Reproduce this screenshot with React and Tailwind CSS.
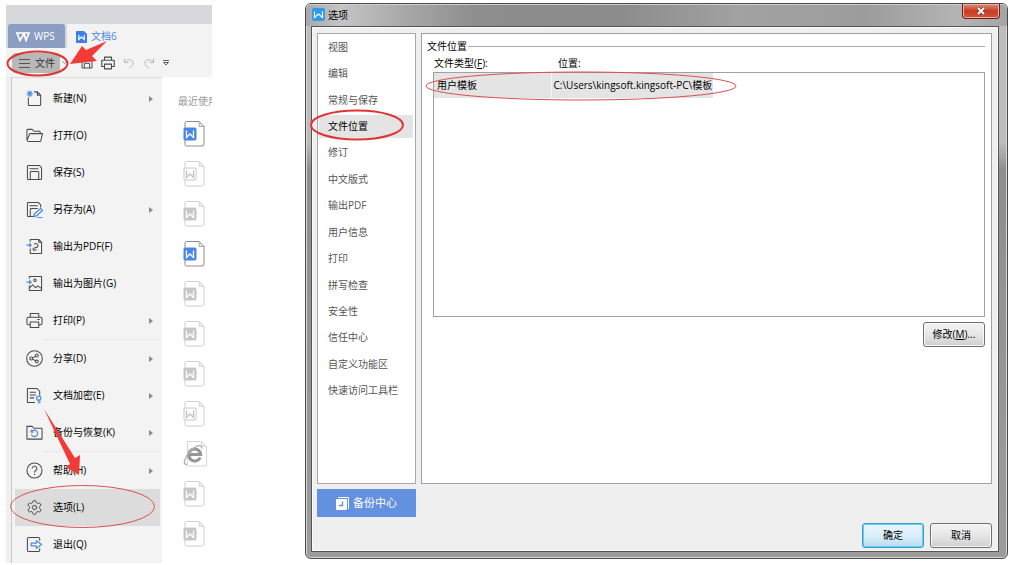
import React from "react";
import { Settings } from "lucide-react";

const G = "#4a4a4a";
const B = "#4a8fe0";

function Icon({ children, size = "size-[17px]" }) {
  return (
    <svg viewBox="0 0 18 18" className={`${size} shrink-0`} fill="none" stroke={G} strokeWidth="1.1" strokeLinejoin="round" aria-hidden="true">
      {children}
    </svg>
  );
}

const icons = {
  new: (
    <Icon>
      <path d="M2.500 8v7.500a1 1 0 0 0 1 1h11a1 1 0 0 0 1-1V5.500l-3.500-3.500H8.500M12 2v3.500h3.500" />
      <path d="M4 .5v7M.5 4h7M1.500 1.500l5 5M6.500 1.500l-5 5" stroke={B} />
    </Icon>
  ),
  open: (
    <Icon>
      <path d="M1 14.500V3.500a1 1 0 0 1 1-1h4.500l2 2H14a1 1 0 0 1 1 1V7M1 14.500 4 7h13.500l-1.800 7.500a1 1 0 0 1-1 .8H1.500" />
    </Icon>
  ),
  save: (
    <Icon>
      <path d="M2.500 1.500H14l2.500 2.500v11.500a1 1 0 0 1-1 1h-13a1 1 0 0 1-1-1v-13a1 1 0 0 1 1-1zM4.500 16.500V9a1 1 0 0 1 1-1h7a1 1 0 0 1 1 1v7.500M3.500 5h9.500" />
    </Icon>
  ),
  saveAs: (
    <Icon>
      <path d="M7.500 16.500h-5a1 1 0 0 1-1-1v-13a1 1 0 0 1 1-1H13l2.500 2.500v3M4.500 16V9a1 1 0 0 1 1-1h7M3.500 5h9" />
      <path d="m9 13.500 6.500-5.500 2 2-6.500 5.800-3 1zM12 17.500h5.500" stroke={B} strokeWidth="1.300" />
    </Icon>
  ),
  pdf: (
    <Icon>
      <path d="M4.500 4V1.500h9l3 3v12h-12V11M13.500 1.500v3h3" />
      <path d="M8.500 6.500c2-1.500 5 0 4 2.500-.8 2-4.500.5-5 2.500-.3 2 2.500 2 3.500.5" />
      <path d="M.5 7.500h5M3.500 5.500l2 2-2 2" stroke={B} strokeWidth="1.300" />
    </Icon>
  ),
  image: (
    <Icon>
      <path d="M3.500 4V1.500h13v15h-13V11M3.500 14l3.500-3.500 3 3 2.500-2 4 3" />
      <circle cx="9.500" cy="5.500" r="1.300" />
      <path d="M.5 7.500h5M3.500 5.500l2 2-2 2" stroke={B} strokeWidth="1.300" />
    </Icon>
  ),
  print: (
    <Icon>
      <path d="M4.500 5.500v-4h9v4M4.500 13.500h-2a1.500 1.500 0 0 1-1.500-1.500V7a1.500 1.500 0 0 1 1.500-1.500h13A1.500 1.500 0 0 1 17 7v5a1.500 1.500 0 0 1-1.500 1.500h-2M4.500 10.500h9v6h-9zM12 8h2.500" />
    </Icon>
  ),
  share: (
    <Icon>
      <circle cx="9" cy="9" r="8.300" />
      <circle cx="5.500" cy="9" r="1.500" />
      <circle cx="11.500" cy="5.800" r="1.500" />
      <circle cx="11.500" cy="12.200" r="1.500" />
      <path d="m7 8.300 3-1.700M7 9.700l3 1.700" />
    </Icon>
  ),
  encrypt: (
    <Icon>
      <path d="M9.500 16.500h-8v-15h10l3 3V9M4 5.500h6.500M4 8.500h6.500M4 11.500h4.500" />
      <circle cx="13.500" cy="11.800" r="2.200" stroke={B} strokeWidth="1.300" />
      <path d="M13.500 14v3.500M13.500 16h2" stroke={B} strokeWidth="1.300" />
    </Icon>
  ),
  backup: (
    <Icon>
      <path d="M1 16V2.500h5.500l2 2h8.500V16z" />
      <path d="M6 8.200a3.400 3.400 0 1 1-.3 2.800M5.500 6v2.500H8" stroke={B} strokeWidth="1.300" />
    </Icon>
  ),
  help: (
    <Icon>
      <circle cx="9" cy="9" r="8" />
      <path d="M6.500 7a2.500 2.500 0 1 1 3.500 2.300c-.8.400-1 .7-1 1.700M9 12.500v1.200" />
    </Icon>
  ),
  options: <Settings className="size-[17px] shrink-0 text-[#4a4a4a]" strokeWidth={1.4} aria-hidden="true" />,
  exit: (
    <Icon>
      <path d="M14.500 5V3a1.500 1.500 0 0 0-1.500-1.500H3A1.500 1.500 0 0 0 1.500 3v12A1.500 1.500 0 0 0 3 16.500h10a1.500 1.500 0 0 0 1.500-1.500v-2" />
      <path d="M5.500 7.500h5.500V5l5.500 4-5.500 4v-2.500H5.500z" stroke={B} strokeWidth="1.300" />
    </Icon>
  ),
};

const menuGroups = [
  [
    ["new", "新建(N)", true],
    ["open", "打开(O)"],
    ["save", "保存(S)"],
    ["saveAs", "另存为(A)", true],
    ["pdf", "输出为PDF(F)"],
    ["image", "输出为图片(G)"],
    ["print", "打印(P)", true],
  ],
  [
    ["share", "分享(D)", true],
    ["encrypt", "文档加密(E)", true],
    ["backup", "备份与恢复(K)", true],
  ],
  [
    ["help", "帮助(H)", true],
    ["options", "选项(L)"],
    ["exit", "退出(Q)"],
  ],
];

function MenuItem({ icon, label, sub }) {
  const active = icon === "options";
  return (
    <button type="button" className={`flex h-[37px] items-center gap-2.5 pr-[7px] pl-[11px] text-left ${active ? "bg-[#dcdcdc]" : ""}`}>
      {icons[icon]}
      <span className="grow whitespace-nowrap">{label}</span>
      {sub && (
        <svg viewBox="0 0 4 6" className="h-1.5 w-1" fill="#8a8a8a" aria-hidden="true">
          <path d="M0 0l4 3-4 3z" />
        </svg>
      )}
    </button>
  );
}

const fileKinds = ["blue", "outline", "gray", "blue", "gray", "gray", "gray", "outline", "web", "gray", "gray"];

function FileIcon({ kind }) {
  const blue = kind === "blue";
  const line = blue ? "#8c8c8c" : "#cfcfcf";
  if (kind === "web") {
    return (
      <svg viewBox="0 0 24 26" className="h-[26px] w-6" fill="none" aria-hidden="true">
        <path d="M4.500 .5h14l5 5V25h-19z" fill="#fff" stroke="#d4d4d4" />
        <path d="M18.500 .5v5h5z" fill="#ececec" stroke="#d4d4d4" strokeWidth=".7" />
        <path d="M17.200 16.500a6 6 0 1 1 .5-3H7" stroke="#969696" strokeWidth="3" />
        <path d="M4 23.500C-1.500 24 2 15 9 8.500c6-5 10.500-5 9.500-1" stroke="#b0b0b0" strokeWidth="1.400" />
      </svg>
    );
  }
  return (
    <svg viewBox="0 0 24 26" className="h-[26px] w-6" fill="none" aria-hidden="true">
      <path d="M3.500 .5h12.500l5 5V23a2 2 0 0 1-2 2H3.500a1.500 1.500 0 0 1-1.500-1.500V2A1.500 1.500 0 0 1 3.500 .5z" fill="#fff" stroke={line} />
      <path d="M16 .5v5h5z" fill="#ececec" stroke={line} strokeWidth=".7" />
      <rect x="1" y="7" width="12" height="12" rx="1" fill={blue ? "#4a86e8" : kind === "outline" ? "#fff" : "#c6c6c6"} stroke={blue ? "#4a86e8" : "#c6c6c6"} />
      <path d="M3.500 9.500v7l3.500-3.500 3.500 3.500v-7" stroke={kind === "outline" ? "#c0c0c0" : "#fff"} strokeWidth="1.300" />
    </svg>
  );
}

function WpsPanel() {
  return (
    <section className="relative mt-[5px] flex w-[206px] shrink-0 flex-col bg-[#f3f3f4]">
      <div className="flex h-[43px] items-end bg-[#d6d8db] pl-0.5">
        <button type="button" className="flex h-6 w-[57px] items-center gap-1 rounded-t-[3px] bg-[#8b9dc3] pt-px pl-2 text-[10px] text-white">
          <svg viewBox="0 0 14 10" className="h-2.5 w-3.5" fill="none" stroke="#fff" strokeWidth="1.700" aria-hidden="true">
            <path d="M1 1l3 7.500L8 1.500l2 7L13 1M0 1h8M8.500 1H14" />
          </svg>
          WPS
        </button>
        <button type="button" className="ml-0.5 flex h-6 grow items-center gap-1 bg-[#f3f3f4] pt-px pl-[9px] text-[10px] text-[#4a86e8]">
          <svg viewBox="0 0 11 12" className="h-3 w-[11px]" aria-hidden="true">
            <path d="M1 0h7l3 3v8a1 1 0 0 1-1 1H1a1 1 0 0 1-1-1V1a1 1 0 0 1 1-1z" fill="#3f7de8" />
            <path d="M2.800 4v4.500l2.700-2.500 2.700 2.500V4" fill="none" stroke="#fff" strokeWidth="1.200" />
          </svg>
          文档6
        </button>
      </div>
      <div className="flex h-[29px] items-center pl-1.5 text-[#333]">
        <button type="button" className="flex h-5 w-12 items-center gap-[5px] rounded-sm bg-[#b8b8b9] pt-px pl-[7px] text-[10px]">
          <svg viewBox="0 0 11 9" className="h-[9px] w-[11px]" stroke="#555" aria-hidden="true">
            <path d="M0 .5h11M0 4.500h11M0 8.500h11" />
          </svg>
          文件
        </button>
        <button type="button" aria-label="展开" className="ml-0.5">
          <svg viewBox="0 0 5 4" className="h-1 w-[5px]" fill="none" stroke="#888" aria-hidden="true">
            <path d="M.5 .5l2 2 2-2" />
          </svg>
        </button>
        <div className="ml-3.5 flex items-center gap-2">
          <button type="button" aria-label="保存">
            <Icon size="size-3">
              <path d="M1.500 1.500H12l4.500 4.500v10.500h-15zM5 16.500v-7h8v7" strokeWidth="1.500" />
            </Icon>
          </button>
          <button type="button" aria-label="打印">
            <Icon size="size-3.5">
              <path d="M4.500 5.500v-4h9v4M4.500 13.500H1V5.500h16v8h-3.500M4.500 10.500h9v6h-9z" strokeWidth="1.400" />
            </Icon>
          </button>
          <button type="button" aria-label="撤销">
            <svg viewBox="0 0 12 12" className="size-3" fill="none" stroke="#b8b8b8" aria-hidden="true">
              <path d="M1.500 1.500v4h4M1.500 5.500C5 1 10.500 2.500 10 6.500 9.700 8.500 8 10 6 11" />
            </svg>
          </button>
          <button type="button" aria-label="恢复">
            <svg viewBox="0 0 12 12" className="size-3" fill="none" stroke="#b8b8b8" aria-hidden="true">
              <path d="M10.500 1.500v4h-4M10.500 5.500C7 1 1.500 2.500 2 6.500 2.300 8.500 4 10 6 11" />
            </svg>
          </button>
          <button type="button" aria-label="更多">
            <svg viewBox="0 0 6 6" className="size-1.5" fill="none" stroke="#666" aria-hidden="true">
              <path d="M0 .5h6M.5 2.500h5L3 5z" />
            </svg>
          </button>
        </div>
      </div>
      <div className="flex grow">
        <div className="w-[6px] shrink-0 border-r border-[#c8c8c8] bg-[#efeff0]" />
        <nav className="flex w-[150px] shrink-0 flex-col border-t border-[#dcdcdc] bg-[#f3f3f3] pt-0.5 pr-0.5 pl-[3px] text-[10px] text-black">
          {menuGroups.map((group, i) => (
            <div key={i} className="flex flex-col">
              {i > 0 && <hr className="ml-7 border-[#e8e8e8]" />}
              {group.map(([icon, label, sub]) => (
                <MenuItem key={icon} icon={icon} label={label} sub={sub} />
              ))}
            </div>
          ))}
        </nav>
        <div className="flex min-w-0 grow flex-col overflow-hidden bg-white">
          <h2 className="mt-4 ml-4 text-[10px] leading-4 whitespace-nowrap text-[#999]">最近使用</h2>
          <ul className="mt-3 ml-[21px] flex flex-col gap-3.5">
            {fileKinds.map((kind, i) => (
              <li key={i}>
                <FileIcon kind={kind} />
              </li>
            ))}
          </ul>
        </div>
      </div>
      <svg viewBox="0 0 206 557" className="pointer-events-none absolute top-0 left-0 h-[557px] w-[206px]" fill="none" aria-hidden="true">
        <ellipse cx="31.500" cy="58.500" rx="30" ry="12" stroke="#e23333" strokeWidth="2" />
        <path d="M64 59l12-18 4 4 21-9-15 15 5 5z" fill="#f23a36" />
        <path d="M38 404l31 49 5-3-1 20-13-8 4-3z" fill="#f23a36" />
        <ellipse cx="76.500" cy="501.500" rx="72" ry="21" stroke="#d9504f" />
      </svg>
    </section>
  );
}

const categories = ["视图", "编辑", "常规与保存", "文件位置", "修订", "中文版式", "输出PDF", "用户信息", "打印", "拼写检查", "安全性", "信任中心", "自定义功能区", "快速访问工具栏"];

const plain = "border-[#707070] bg-linear-to-b from-[#f3f3f3] via-[#e6e6e6] to-[#cfcfcf] shadow-[inset_0_0_0_1px_#f8f8f8]";
const primary = "border-[#3c9cc4] bg-linear-to-b from-[#eaf6fd] via-[#d9eef9] to-[#b9dcf0] shadow-[inset_0_0_0_1px_#5fd3f5]";

function DialogButton({ look = plain, children }) {
  return (
    <button type="button" className={`h-[25px] w-[62px] rounded-[3px] border text-[10px] text-black ${look}`}>
      {children}
    </button>
  );
}

function OptionsDialog() {
  return (
    <section className="relative mt-[3px] mr-[3px] mb-1 ml-[93px] flex min-w-0 grow flex-col rounded-[6px] border border-[#4a4a4a] bg-linear-to-b from-[#bcbcbc] from-25% via-[#8e8e8e] via-30% to-[#9c9c9c] pr-2 pb-1.5 pl-[5px] shadow-[inset_0_0_0_1px_#d8d8d8]">
      <header className="-mr-2 -ml-[5px] flex h-[22px] items-start rounded-t-[5px] bg-[linear-gradient(90deg,#a8a8a8_0%,#c4c4c4_5%,#a8a8a8_14%,#8e8e8e_24%,#8c8c8c_45%,#a2a2a2_62%,#9c9c9c_80%,#b4b4b4_93%,#a4a4a4_100%)] pl-1.5 shadow-[inset_0_1px_0_#d0d0d0]">
        <svg viewBox="0 0 13 13" className="mt-1 size-[13px]" aria-hidden="true">
          <rect width="13" height="13" rx="2" fill="#2f9bf0" />
          <path d="M2.500 3.500v6l4-3.500 4 3.500v-6" fill="none" stroke="#fff" strokeWidth="1.200" />
        </svg>
        <h1 className="ml-[3px] grow text-[10px] leading-[22px] text-black">选项</h1>
        <button type="button" aria-label="关闭" className="mr-[7px] flex h-[15px] w-[38px] items-center justify-center rounded-b-[4px] border border-t-0 border-[#6b2018] bg-linear-to-b from-[#e08a78] via-[#c63a22] to-[#d4553c] shadow-[inset_0_0_0_1px_#eeb0a4]">
          <svg viewBox="0 0 10 8" className="h-2 w-2.5" aria-hidden="true">
            <path d="M2 1l6 6M8 1L2 7" stroke="#5a4444" strokeWidth="3.200" />
            <path d="M2 1l6 6M8 1L2 7" stroke="#fff" strokeWidth="1.800" />
          </svg>
        </button>
      </header>
      <div className="flex grow flex-col border border-[#555] bg-[#efefef] pt-1.5 pr-1.5 pl-[5px] shadow-[inset_0_0_0_1px_#fafafa]">
        <div className="flex gap-[5px]">
          <div className="flex w-[99px] shrink-0 flex-col gap-[5px]">
            <nav className="h-[451px] border border-[#a8a8a8] bg-white pr-0.5 pl-px">
              <ul className="grid h-[370px] auto-rows-fr text-[10px] text-[#555]">
                {categories.map((name) => (
                  <li key={name} className="flex items-center">
                    <button type="button" className={`flex h-[23px] w-full items-center pl-[9px] whitespace-nowrap ${name === "文件位置" ? "bg-[#e4e4e4] text-black" : ""}`}>
                      {name}
                    </button>
                  </li>
                ))}
              </ul>
            </nav>
            <button type="button" className="flex h-7 items-center justify-center gap-1 bg-[#6391df] text-[11px] text-white">
              <svg viewBox="0 0 13 13" className="size-[13px]" aria-hidden="true">
                <path d="M2 .5h10.500V12" fill="none" stroke="#fff" />
                <rect y="2" width="11" height="11" rx="1" fill="#fff" />
                <path d="M6.500 4.500v4H3" fill="none" stroke="#6391df" strokeWidth="1.300" />
              </svg>
              备份中心
            </button>
          </div>
          <main className="flex h-[451px] min-w-0 grow flex-col border border-[#a0a0a8] bg-white pt-1 pr-1.5 pl-[5px] text-[10px] text-black">
            <div className="flex h-4 items-center gap-px">
              <h2>文件位置</h2>
              <hr className="grow border-[#a8a8a8]" />
            </div>
            <div className="mt-[18px] ml-1.5 h-[245px] border border-[#a0a0a8]">
              <table className="-mt-[18px] table-fixed text-left">
                <thead>
                  <tr className="h-[18px]">
                    <th className="w-[117px] pb-0.5 font-normal">文件类型(<u>F</u>):</th>
                    <th className="pb-0.5 pl-[7px] font-normal">位置:</th>
                  </tr>
                </thead>
                <tbody>
                  <tr className="h-[25px] bg-[#e4e4e4]">
                    <td className="border-r border-[#f6f6f6] pl-[3px]">用户模板</td>
                    <td className="pr-px pl-0.5 whitespace-nowrap">C:\Users\kingsoft.kingsoft-PC\模板</td>
                  </tr>
                </tbody>
              </table>
            </div>
            <div className="mt-[5px] flex justify-end">
              <DialogButton>修改(<u>M</u>)...</DialogButton>
            </div>
          </main>
        </div>
        <footer className="mt-1.5 flex justify-end gap-1.5">
          <DialogButton look={primary}>确定</DialogButton>
          <DialogButton>取消</DialogButton>
        </footer>
      </div>
      <svg viewBox="0 0 440 150" className="pointer-events-none absolute top-0 left-0 h-[150px] w-[440px]" fill="none" aria-hidden="true">
        <ellipse cx="51" cy="121" rx="46" ry="14.500" stroke="#e23333" strokeWidth="2" />
        <ellipse cx="275" cy="82" rx="155" ry="14" stroke="#d9504f" />
      </svg>
    </section>
  );
}

export default function App() {
  return (
    <div className="flex bg-white pl-1.5 font-['Open_Sans','Noto_Sans_CJK_SC',sans-serif]">
      <WpsPanel />
      <OptionsDialog />
    </div>
  );
}
